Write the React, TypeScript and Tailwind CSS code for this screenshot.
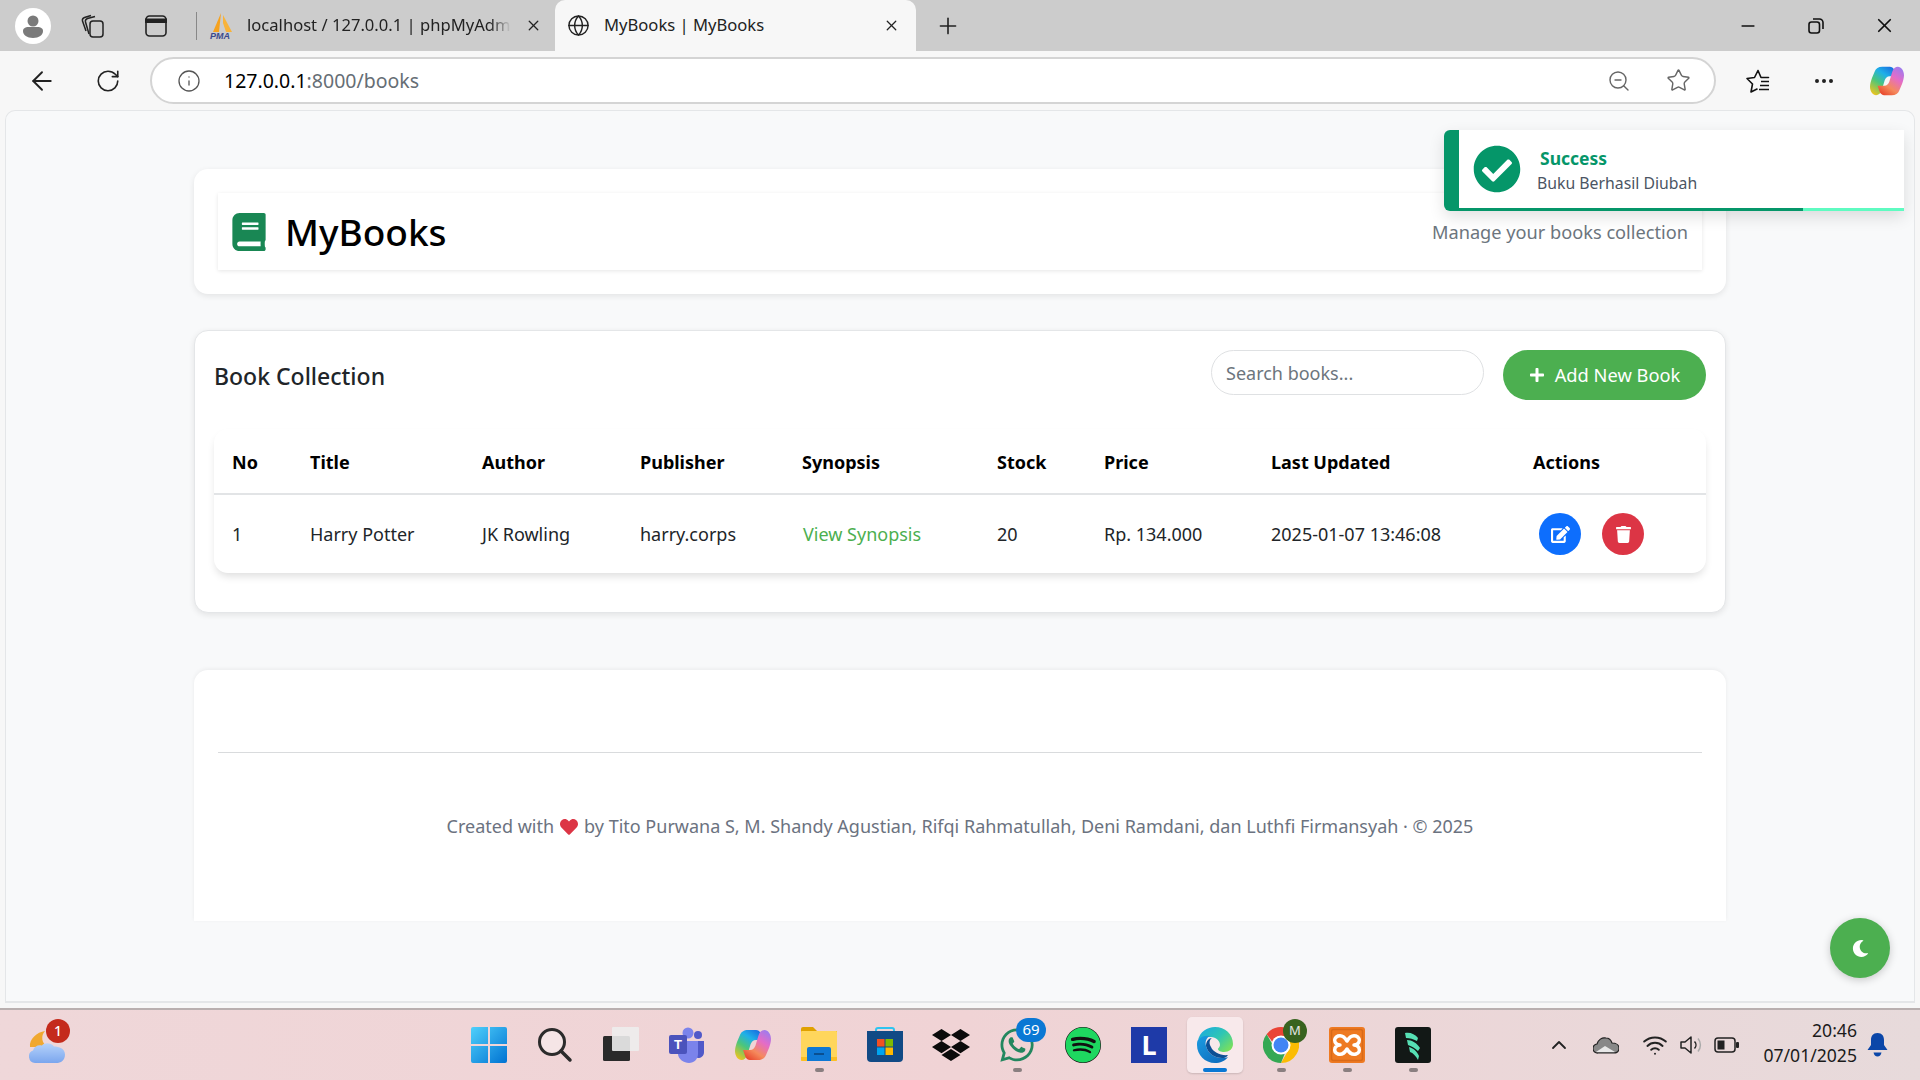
import { ArrowLeft, ChevronUp, Info, Minus, MoreHorizontal, Plus, RotateCw, Star, Wifi, X, ZoomOut, Globe } from 'lucide-react'
import { FaBook, FaCheckCircle, FaDropbox, FaEdit, FaHeart, FaMoon, FaPlus, FaSpotify, FaTrash, FaWhatsapp } from 'react-icons/fa'
import type { ReactNode } from 'react'

function CopilotIcon({ size, id }: { size: number; id: string }) {
  const half = 'M13 3h8c2 0 3.500 1 4.500 3l2.500 7h-7c-3 0-4.500 2-5.500 4.500l-3 10C11.500 31 9 33 6.500 33 3 33 0 29 0 24c0-3 1-6 2-9l3-7c1-3 4-5 8-5z'
  return (
    <svg width={size} height={size} viewBox="0 0 36 36">
      <defs>
        <linearGradient id={`${id}a`} x1="0.8" y1="0" x2="0.15" y2="1">
          <stop offset="0" stopColor="#1a6fe0" />
          <stop offset="0.3" stopColor="#1fb0e8" />
          <stop offset="0.6" stopColor="#4cc67a" />
          <stop offset="1" stopColor="#f2c41c" />
        </linearGradient>
        <linearGradient id={`${id}c`} x1="0.8" y1="0" x2="0.15" y2="1">
          <stop offset="0" stopColor="#e8452c" />
          <stop offset="0.3" stopColor="#f58a5c" />
          <stop offset="0.65" stopColor="#e46cc8" />
          <stop offset="1" stopColor="#9a7cf0" />
        </linearGradient>
      </defs>
      <path d={half} fill={`url(#${id}a)`} />
      <path d={half} fill={`url(#${id}c)`} transform="rotate(180 18 18)" />
    </svg>
  )
}

function FavoritesIcon() {
  return (
    <svg width="26" height="26" viewBox="0 0 26 26" fill="none" stroke="#111" strokeWidth="1.600">
      <path d="M13 2.500l3 7h7.500M6 24l1.500-8L2 10.500l7.500-1L13 2.500M6 24l6-3" strokeLinejoin="round" strokeLinecap="round" />
      <path d="M16 13.500h8M15 17.500h9M14 21.500h10" />
    </svg>
  )
}

function PmaIcon() {
  return (
    <svg width="26" height="28" viewBox="0 0 26 28">
      <path d="M12 1 4 20h6z" fill="#f6a21e" />
      <path d="M14 3l9 17h-6l-3-9z" fill="#f8b33a" />
      <text x="1" y="27" fontSize="9" fontWeight="700" fontStyle="italic" fill="#3b4a8c" fontFamily="Liberation Sans, sans-serif">PMA</text>
    </svg>
  )
}

function RestoreIcon() {
  return (
    <svg width="16" height="16" viewBox="0 0 16 16" fill="none" stroke="#111" strokeWidth="1.600">
      <rect x="1" y="4" width="10.500" height="11" rx="2.500" />
      <path d="M5 1h6.500A3.500 3.500 0 0 1 15 4.500V11" />
    </svg>
  )
}

function TabBar() {
  return (
    <div className="flex h-[51px] shrink-0 items-center bg-[#cccccc]">
      <div className="ml-[15px] flex h-[36px] w-[36px] items-center justify-center rounded-full bg-white">
        <svg width="22" height="24" viewBox="0 0 22 24" fill="#7a7a7a">
          <circle cx="11" cy="7" r="5.500" />
          <path d="M1 17c0-3 3-4 5-4h10c2 0 5 1 5 4 0 4-4 7-10 7S1 21 1 17z" />
        </svg>
      </div>
      <div className="ml-[26px] flex w-[32px] justify-center">
        <svg width="26" height="26" viewBox="0 0 26 26" fill="none" stroke="#222" strokeWidth="1.500">
          <rect x="10" y="8" width="13" height="16" rx="3" />
          <path d="M9 21 5.500 9c-.5-2 .5-3 2-3.500L15 3.500M6 18 2.500 8C2 6 3 5 4.500 4.500L11 2.500" />
        </svg>
      </div>
      <div className="ml-[31px] flex w-[32px] justify-center">
        <svg width="22" height="22" viewBox="0 0 22 22" fill="none" stroke="#222" strokeWidth="1.600">
          <rect x="1" y="1" width="20" height="20" rx="3.500" />
          <path d="M1 5h20v1.500H1z" fill="#222" strokeWidth="3" />
          <path d="M1 7h20" />
        </svg>
      </div>
      <div className="ml-[24px] h-[28px] w-px bg-[#888]" />
      <div className="ml-[5px] flex h-[51px] w-[361px] items-center pl-[4px]">
        <div className="flex w-[32px] justify-center"><PmaIcon /></div>
        <span className="ml-[9px] w-[264px] overflow-hidden whitespace-nowrap text-[16.600px] text-[#222] [mask-image:linear-gradient(to_right,black_92%,transparent)]">localhost / 127.0.0.1 | phpMyAdmin</span>
        <X size={17} strokeWidth={1.800} color="#222" className="ml-[14px]" />
      </div>
      <div className="-ml-[8px] flex h-[51px] w-[361px] items-center rounded-t-[10px] bg-[#f7f7f7] pl-[7px]">
        <div className="flex w-[32px] justify-center"><Globe size={23} strokeWidth={1.500} color="#222" /></div>
        <span className="ml-[10px] w-[268px] whitespace-nowrap text-[16.600px] text-[#222]">MyBooks | MyBooks</span>
        <X size={17} strokeWidth={1.800} color="#222" className="ml-[11px]" />
      </div>
      <Plus size={26} strokeWidth={1.500} color="#222" className="ml-[19px]" />
      <div className="ml-auto mr-[2px] flex items-center">
        <div className="flex w-[68px] justify-center"><Minus size={20} strokeWidth={2} color="#111" /></div>
        <div className="flex w-[68px] justify-center"><RestoreIcon /></div>
        <div className="flex w-[68px] justify-center"><X size={23} strokeWidth={1.800} color="#111" /></div>
      </div>
    </div>
  )
}

function Toolbar() {
  return (
    <div className="flex h-[59px] shrink-0 items-center bg-[#f7f7f7]">
      <ArrowLeft size={30} strokeWidth={1.500} color="#222" className="ml-[27px]" />
      <RotateCw size={26} strokeWidth={1.500} color="#222" className="ml-[38px]" />
      <div className="ml-[29px] flex h-[47px] w-[1566px] items-center rounded-full border-2 border-[#d4d4d4] bg-white">
        <Info size={24} strokeWidth={1.300} color="#555" className="ml-[25px]" />
        <span className="ml-[23px] text-[19.500px] text-black">127.0.0.1<span className="text-[#666e75]">:8000/books</span></span>
        <ZoomOut size={24} strokeWidth={1.400} color="#666" className="ml-auto" />
        <Star size={25} strokeWidth={1.400} color="#666" className="ml-[35px] mr-[23px]" />
      </div>
      <div className="ml-[29px]"><FavoritesIcon /></div>
      <MoreHorizontal size={24} strokeWidth={2} color="#222" className="ml-[41px]" />
      <div className="ml-[34px]"><CopilotIcon size={34} id="cp1" /></div>
    </div>
  )
}

function HeaderCard() {
  return (
    <div className="rounded-[14px] bg-white p-[24px] shadow-[0_2px_6px_rgba(0,0,0,0.09)]">
      <div className="flex h-[77px] items-center justify-between bg-white px-[12px] shadow-[0_1px_4px_rgba(0,0,0,0.1)]">
        <div className="flex items-center">
          <FaBook size={38} color="#198754" />
          <span className="ml-[17px] text-[37px] font-medium leading-none text-black">MyBooks</span>
        </div>
        <span className="mr-[2px] mt-[3px] text-[18.200px] text-[#6c757d]">Manage your books collection</span>
      </div>
    </div>
  )
}

const headers = ['No', 'Title', 'Author', 'Publisher', 'Synopsis', 'Stock', 'Price', 'Last Updated', 'Actions']

function BookTable() {
  return (
    <div className="mt-[29px] overflow-hidden rounded-[14px] bg-white shadow-[0_5px_8px_-2px_rgba(0,0,0,0.14)]">
      <table className="w-full table-fixed border-collapse">
        <colgroup>
          <col className="w-[78px]" />
          <col className="w-[172px]" />
          <col className="w-[158px]" />
          <col className="w-[162px]" />
          <col className="w-[195px]" />
          <col className="w-[107px]" />
          <col className="w-[167px]" />
          <col className="w-[262px]" />
          <col className="w-[191px]" />
        </colgroup>
        <thead>
          <tr className="h-[65px] border-b-2 border-[#e2e4e6]">
            {headers.map((h) => (
              <th key={h} className="pl-[18px] pt-[2px] text-left text-[18px] font-bold text-black">{h}</th>
            ))}
          </tr>
        </thead>
        <tbody>
          <tr className="h-[79px] text-[18px] text-[#212529]">
            <td className="pl-[18px]">1</td>
            <td className="pl-[18px]">Harry Potter</td>
            <td className="pl-[18px]">JK Rowling</td>
            <td className="pl-[18px]">harry.corps</td>
            <td className="pl-[19px] text-[#4caf50]">View Synopsis</td>
            <td className="pl-[18px]">20</td>
            <td className="pl-[18px]">Rp. 134.000</td>
            <td className="pl-[18px]">2025-01-07 13:46:08</td>
            <td className="pl-[24px]">
              <div className="flex gap-[21px]">
                <button className="flex h-[42px] w-[42px] items-center justify-center rounded-full bg-[#0d6efd] text-white"><FaEdit size={19} /></button>
                <button className="flex h-[42px] w-[42px] items-center justify-center rounded-full bg-[#dc3545] text-white"><FaTrash size={17} /></button>
              </div>
            </td>
          </tr>
        </tbody>
      </table>
    </div>
  )
}

function CollectionCard() {
  return (
    <div className="mt-[36px] rounded-[14px] border border-[#e4e6e8] bg-white px-[19px] pb-[39px] pt-[19px] shadow-[0_2px_6px_rgba(0,0,0,0.09)]">
      <div className="flex h-[50px] items-center">
        <h2 className="mt-[2px] text-[23px] font-medium text-[#212529]">Book Collection</h2>
        <input
          placeholder="Search books..."
          className="ml-auto mb-[5px] h-[45px] w-[273px] rounded-full border border-[#dfe1e3] px-[14px] text-[18px] placeholder:text-[#6c757d]"
        />
        <button className="ml-[19px] flex h-[50px] w-[203px] items-center justify-center gap-[10px] rounded-full bg-[#4caf50] text-[18.300px] text-white">
          <FaPlus size={16} />
          Add New Book
        </button>
      </div>
      <BookTable />
    </div>
  )
}

function FooterCard() {
  return (
    <div className="mt-[57px] h-[251px] rounded-t-[14px] bg-white px-[24px] pt-[82px] shadow-[0_-1px_4px_rgba(0,0,0,0.06)]">
      <div className="h-px bg-[#d9dbdd]" />
      <p className="mt-[60px] flex items-center justify-center gap-[6px] text-[18px] text-[#6b7280]">
        Created with <FaHeart size={18} color="#dc3545" /> by Tito Purwana S, M. Shandy Agustian, Rifqi Rahmatullah, Deni Ramdani, dan Luthfi Firmansyah · © 2025
      </p>
    </div>
  )
}

function Toast() {
  return (
    <div className="absolute left-[1438px] top-[19px] flex h-[81px] w-[460px] overflow-hidden rounded-l-[6px] bg-white shadow-[0_6px_16px_rgba(0,0,0,0.12)]">
      <div className="w-[15px] bg-[#059669]" />
      <div className="relative flex flex-1 items-center pb-[3px]">
        <FaCheckCircle size={48} color="#059669" className="ml-[14px]" />
        <div className="ml-[16px] mt-[4px] flex flex-col">
          <span className="ml-[3px] text-[17.500px] font-bold leading-[24px] text-[#059669]">Success</span>
          <span className="text-[15.800px] leading-[26px] text-[#4b5563]">Buku Berhasil Diubah</span>
        </div>
        <div className="absolute bottom-0 left-0 flex h-[3px] w-full">
          <div className="w-[344px] bg-[#059669]" />
          <div className="flex-1 bg-[#5ffbc1]" />
        </div>
      </div>
    </div>
  )
}

function WindowsIcon() {
  return (
    <svg width="36" height="36" viewBox="0 0 36 36">
      <defs>
        <linearGradient id="win" x1="0" y1="0" x2="1" y2="1">
          <stop offset="0" stopColor="#4fd0fb" />
          <stop offset="1" stopColor="#0072d2" />
        </linearGradient>
      </defs>
      <path d="M2 0h15v17H0V2a2 2 0 0 1 2-2zM19 0h15a2 2 0 0 1 2 2v15H19zM0 19h17v17H2a2 2 0 0 1-2-2zM19 19h17v15a2 2 0 0 1-2 2H19z" fill="url(#win)" />
    </svg>
  )
}

function TaskViewIcon() {
  return (
    <svg width="36" height="36" viewBox="0 0 36 36">
      <rect x="0" y="9" width="27" height="25" rx="1.500" fill="#2a2a2a" />
      <rect x="9" y="0" width="27" height="24" rx="1" fill="#ededed" fillOpacity="0.9" />
    </svg>
  )
}

function TeamsIcon() {
  return (
    <svg width="36" height="36" viewBox="0 0 36 36">
      <circle cx="29" cy="8" r="4" fill="#5059c9" />
      <circle cx="19" cy="6" r="5.500" fill="#7b83eb" />
      <path d="M26 14h9v11c0 4-3 6-6 6l-3-1z" fill="#5059c9" />
      <path d="M9 14h20v13c0 5-4 9-9 9s-11-4-11-9z" fill="#7b83eb" />
      <rect x="0" y="8" width="18" height="19" rx="2" fill="#4b53bc" />
      <text x="9" y="22" textAnchor="middle" fontSize="13" fontWeight="700" fill="#fff" fontFamily="Liberation Sans, sans-serif">T</text>
    </svg>
  )
}

function FilesIcon() {
  return (
    <svg width="36" height="36" viewBox="0 0 36 36">
      <path d="M0 2a2 2 0 0 1 2-2h10l4 4h20v6H0z" fill="#e0a100" />
      <rect x="0" y="4" width="36" height="30" rx="1" fill="#ffd65c" />
      <path d="M6 22a2 2 0 0 1 2-2h20a2 2 0 0 1 2 2v12H6z" fill="#0f78d4" />
      <path d="M0 30h6v4H1a1 1 0 0 1-1-1zM30 30h6v3a1 1 0 0 1-1 1h-5z" fill="#fbbf24" />
      <rect x="13" y="26" width="10" height="2" fill="#0a4f90" />
    </svg>
  )
}

function StoreIcon() {
  return (
    <svg width="36" height="36" viewBox="0 0 36 36">
      <path d="M9 7V3a2 2 0 0 1 2-2h14a2 2 0 0 1 2 2v4" fill="none" stroke="#2ec4f0" strokeWidth="2" />
      <path d="M0 4h36v27a4 4 0 0 1-4 4H4a4 4 0 0 1-4-4z" fill="#114a85" />
      <rect x="10" y="12" width="7.500" height="7.500" fill="#f25022" />
      <rect x="18.500" y="12" width="7.500" height="7.500" fill="#7fba00" />
      <rect x="10" y="20.500" width="7.500" height="7.500" fill="#00a4ef" />
      <rect x="18.500" y="20.500" width="7.500" height="7.500" fill="#ffb900" />
    </svg>
  )
}

function LIcon() {
  return (
    <div className="flex h-[36px] w-[36px] items-center justify-center bg-[#1e3aa8] text-[27px] font-bold leading-none text-white">L</div>
  )
}

function EdgeIcon() {
  return (
    <svg width="36" height="36" viewBox="0 0 36 36">
      <defs>
        <linearGradient id="edgeA" x1="0" y1="0" x2="1" y2="0.8">
          <stop offset="0" stopColor="#1ba7e6" />
          <stop offset="0.55" stopColor="#2fc6b4" />
          <stop offset="1" stopColor="#7be05a" />
        </linearGradient>
        <linearGradient id="edgeB" x1="0" y1="0" x2="0.8" y2="1">
          <stop offset="0" stopColor="#1b9de2" />
          <stop offset="1" stopColor="#0f6cbd" />
        </linearGradient>
      </defs>
      <path d="M1 13C3 5 10 0 18 0c10 0 18 7 18 17 0 5-4 8-9 8-3 0-6-1-6-3 0-1 2-2 2-4 0-4-4-8-9-8-6 0-11 2-13 3z" fill="url(#edgeA)" />
      <path d="M1 13c3-4 8-5 12-4-4 2-5 6-4 10 2 8 9 12 16 12 2 0 4 0 6-1-3 4-8 6-13 6C8 36 0 28 0 18c0-2 0-4 1-5z" fill="url(#edgeB)" />
      <path d="M9 19c0-5 3-8 6-8-3 2-3 6-1 9 2 5 10 9 17 8-2 3-4 3-6 3-7 0-14-4-16-12z" fill="#0c4f94" />
    </svg>
  )
}

function ChromeIcon() {
  return (
    <svg width="36" height="36" viewBox="0 0 36 36">
      <path d="M18 0a18 18 0 0 1 15.600 9H18a9 9 0 0 0-8.500 6L3.600 7.200A18 18 0 0 1 18 0z" fill="#ea4335" />
      <path d="M33.600 9A18 18 0 0 1 18 36l7.800-13.500A9 9 0 0 0 25.800 13z" fill="#fbbc04" />
      <path d="M18 36A18 18 0 0 1 3.600 7.200l7.800 13.500A9 9 0 0 0 22 26z" fill="#34a853" />
      <circle cx="18" cy="18" r="9.500" fill="#fff" />
      <circle cx="18" cy="18" r="7.500" fill="#4285f4" />
    </svg>
  )
}

function XamppIcon() {
  return (
    <svg width="36" height="36" viewBox="0 0 36 36">
      <rect width="36" height="36" rx="3" fill="#ee7a22" />
      <rect x="2.500" y="2.500" width="31" height="31" rx="2" fill="none" stroke="#d96a18" strokeWidth="1.500" />
      <path
        d="M18 14C15 9 12 8 9 9c-3 1-4 4-3 6 1 2 3 3 5 3-2 0-4 1-5 3-1 3 0 5 3 6 3 1 6 0 9-5 3 5 6 6 9 5 3-1 4-3 3-6-1-2-3-3-5-3 2 0 4-1 5-3 1-2 0-5-3-6-3-1-6 0-9 5z"
        fill="none"
        stroke="#fff"
        strokeWidth="3.500"
        strokeLinejoin="round"
      />
    </svg>
  )
}

function LastIcon() {
  return (
    <svg width="36" height="36" viewBox="0 0 36 36">
      <rect width="36" height="36" rx="3" fill="#121816" />
      <path d="M10 6c5-1 10 1 13 5l-1 3c-4-2-7-3-11-3zM12 13c5 0 10 3 13 8l-2 3c-3-3-7-5-10-6zM14 20c4 1 8 4 10 9l-1 4c-2-4-5-7-8-8z" fill="#56e0b4" />
    </svg>
  )
}

function TaskIcon({ children, running, active, badge }: { children: ReactNode; running?: boolean; active?: boolean; badge?: ReactNode }) {
  return (
    <div className={`relative flex h-[56px] w-[56px] items-center justify-center rounded-[5px] ${active ? 'bg-[#f8e9eb] shadow-[0_1px_2px_rgba(0,0,0,0.15)]' : ''}`}>
      {children}
      {badge}
      {running && !active && <div className="absolute bottom-[1px] left-[24px] h-[4px] w-[9px] rounded-full bg-[#8a7f80]" />}
      {active && <div className="absolute bottom-[1px] left-[16px] h-[4px] w-[24px] rounded-full bg-[#0a78d4]" />}
    </div>
  )
}

function Taskbar() {
  return (
    <div className="relative flex h-[72px] shrink-0 items-center border-t-2 border-[#b9afaf] bg-gradient-to-r from-[#efd7d9] via-[#f0d3d5] to-[#e7dadb] pb-[1px]">
      <div className="relative ml-[29px] h-[36px] w-[40px]">
        <svg width="40" height="40" viewBox="0 0 40 40">
          <defs>
            <linearGradient id="wx" x1="0" y1="0" x2="0" y2="1">
              <stop offset="0" stopColor="#b5d2fa" />
              <stop offset="1" stopColor="#7ba6ee" />
            </linearGradient>
          </defs>
          <path d="M16 4a10 10 0 0 0 3 16H1C0 12 8 5 16 4z" fill="#f0a830" />
          <path d="M6 36a6.500 6.500 0 0 1-2-12.500c1-4 5-6 9-5 2-3 9-3 12 1 5 0 11 2 11 8s-4 8.500-9 8.500z" fill="url(#wx)" />
        </svg>
        <div className="absolute left-[17px] top-[-8px] flex h-[24px] w-[24px] items-center justify-center rounded-full bg-[#c42b1c] text-[14px] font-medium text-white">1</div>
      </div>
      <div className="absolute left-[461px] flex gap-[10px]">
        <TaskIcon><WindowsIcon /></TaskIcon>
        <TaskIcon>
          <svg width="36" height="36" viewBox="0 0 36 36" fill="none" stroke="#2b2b2b" strokeWidth="3">
            <circle cx="15" cy="15" r="12.500" fill="#f5e5e6" />
            <path d="M24 24l9 9" strokeLinecap="round" strokeWidth="3.500" />
          </svg>
        </TaskIcon>
        <TaskIcon><TaskViewIcon /></TaskIcon>
        <TaskIcon><TeamsIcon /></TaskIcon>
        <TaskIcon><CopilotIcon size={36} id="cp2" /></TaskIcon>
        <TaskIcon running><FilesIcon /></TaskIcon>
        <TaskIcon><StoreIcon /></TaskIcon>
        <TaskIcon><FaDropbox size={38} color="#0b0b0b" /></TaskIcon>
        <TaskIcon
          running
          badge={<div className="absolute left-[27px] top-[1px] flex h-[24px] w-[30px] items-center justify-center rounded-full bg-[#0a78d4] text-[15px] text-white">69</div>}
        >
          <FaWhatsapp size={38} color="#23875f" />
        </TaskIcon>
        <TaskIcon><FaSpotify size={36} color="#1ed760" className="rounded-full bg-[#111]" /></TaskIcon>
        <TaskIcon><LIcon /></TaskIcon>
        <TaskIcon active><EdgeIcon /></TaskIcon>
        <TaskIcon
          running
          badge={<div className="absolute left-[30px] top-[2px] flex h-[24px] w-[24px] items-center justify-center rounded-full bg-[#38631f] text-[13px] text-[#e6e6e6]">M</div>}
        >
          <ChromeIcon />
        </TaskIcon>
        <TaskIcon running><XamppIcon /></TaskIcon>
        <TaskIcon running><LastIcon /></TaskIcon>
      </div>
      <div className="ml-auto flex items-center">
        <ChevronUp size={24} strokeWidth={1.800} color="#222" />
        <svg width="26" height="18" viewBox="0 0 26 18" className="ml-[22px]">
          <path d="M5 17a4.500 4.500 0 0 1-1-9c1-4 5-7 9-6 3 0 5 2 6 5 4 0 7 2 7 5 0 3-2 5-5 5z" fill="#888" stroke="#222" strokeWidth="1.200" />
          <path d="M3 16l9-6 10 6z" fill="#e8e8e8" />
        </svg>
        <Wifi size={26} strokeWidth={1.800} color="#222" className="ml-[23px]" />
        <svg width="26" height="26" viewBox="0 0 26 26" fill="none" stroke="#222" strokeWidth="1.500" className="ml-[11px]">
          <path d="M2 10v6h4l6 5V5l-6 5z" strokeLinejoin="round" />
          <path d="M15.500 9.500a5 5 0 0 1 0 7" />
          <path d="M19 6.500a10 10 0 0 1 0 13" stroke="#aaa" />
        </svg>
        <svg width="25" height="16" viewBox="0 0 25 16" fill="none" className="ml-[9px]">
          <rect x="1" y="1" width="20" height="14" rx="3" stroke="#222" strokeWidth="1.500" />
          <rect x="3.500" y="3.500" width="7" height="9" fill="#222" />
          <rect x="22" y="5" width="3" height="6" rx="1" fill="#222" />
        </svg>
        <div className="mb-[3px] ml-[24px] flex flex-col items-end text-[17.600px] leading-[25px] text-[#1b1b1b]">
          <span>20:46</span>
          <span>07/01/2025</span>
        </div>
        <svg width="21" height="24" viewBox="0 0 21 24" fill="#0a46a8" className="ml-[10px] mr-[32px]">
          <path d="M10.500 0C6 0 4 3 4 7v5l-3.500 5h20L17 12V7c0-4-2-7-6.500-7z" />
          <path d="M6.500 19.500h8c-.5 2.500-2 4-4 4s-3.500-1.500-4-4z" />
        </svg>
      </div>
    </div>
  )
}

export default function App() {
  return (
    <div className="flex h-screen w-full flex-col overflow-hidden bg-[#f7f7f7] font-['Noto_Sans',sans-serif]">
      <TabBar />
      <Toolbar />
      <div className="relative mx-[5px] mb-[5px] flex-1 overflow-hidden rounded-t-[10px] border border-b-2 border-[#e4e6e8] bg-[#f8f9fa] px-[188px] pt-[58px]">
        <HeaderCard />
        <CollectionCard />
        <FooterCard />
        <Toast />
        <button className="absolute left-[1824px] top-[807px] flex h-[60px] w-[60px] items-center justify-center rounded-full bg-[#4caf50] text-white shadow-[0_2px_8px_rgba(0,0,0,0.2)]">
          <FaMoon size={17} />
        </button>
      </div>
      <Taskbar />
    </div>
  )
}
